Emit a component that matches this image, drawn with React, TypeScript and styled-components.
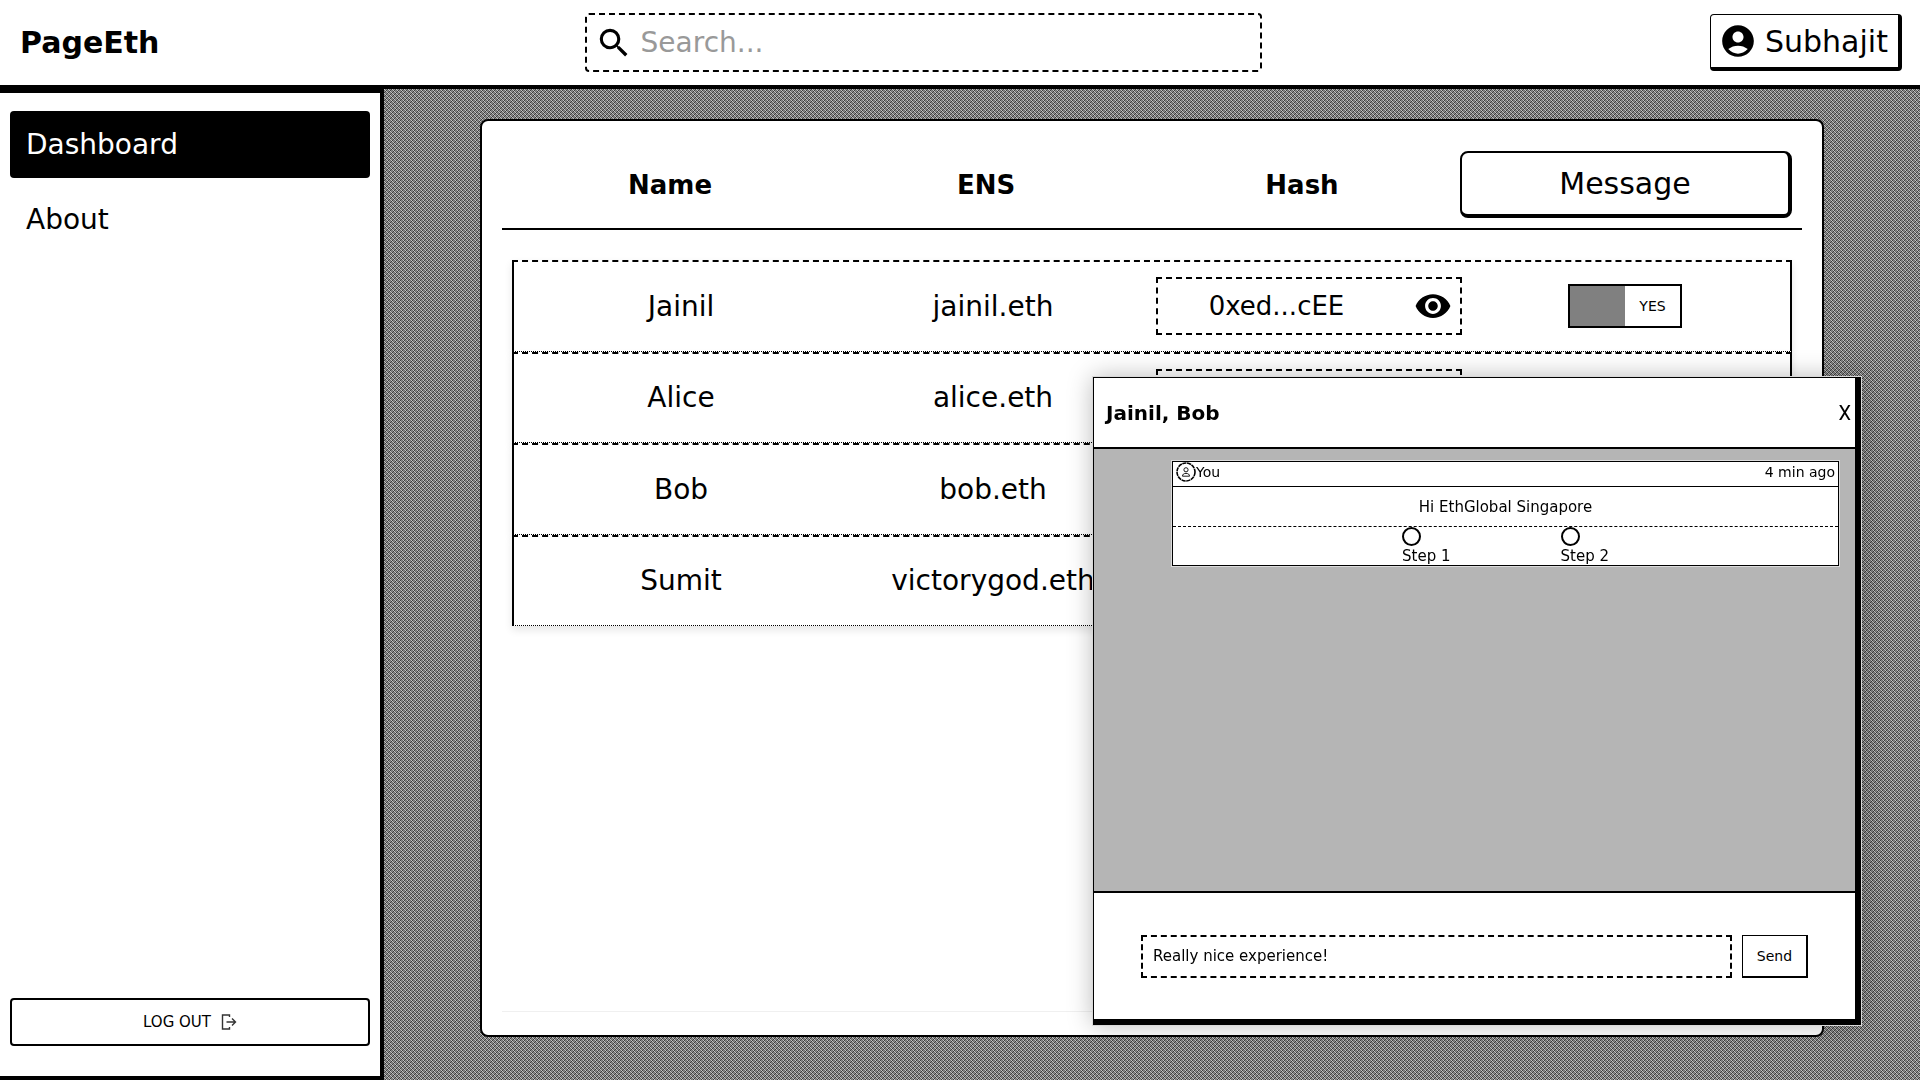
import React, { useState } from 'react';
import styled, { createGlobalStyle, css } from 'styled-components';
import { MdAccountCircle, MdSearch, MdVisibility } from 'react-icons/md';

const GlobalStyle = createGlobalStyle`
  *, *::before, *::after { box-sizing: border-box; }
  body { margin: 0; background: #fff; }
  body, button, input {
    font-family: 'DejaVu Sans', Verdana, sans-serif;
    color: #000;
  }
  button { cursor: pointer; }
`;

const Page = styled.div`
  display: flex;
  flex-direction: column;
  min-height: 100vh;
`;

const TopBar = styled.header`
  display: flex;
  align-items: center;
  padding: 13px 18px 13px 20px;
  border-bottom: 4px solid #000;
  background: #fff;
`;

const Brand = styled.h1`
  flex: 0 0 30%;
  margin: 0;
  font-size: 30px;
  line-height: 40px;
`;

const SearchBox = styled.label`
  display: flex;
  align-items: center;
  gap: 8px;
  width: 36%;
  height: 59px;
  padding: 0 8px;
  border: 2px dashed #000;
  border-radius: 4px;
`;

const SearchInput = styled.input`
  flex: 1;
  min-width: 0;
  border: 0;
  outline: 0;
  padding: 0;
  background: transparent;
  font-size: 28px;
  &::placeholder { color: #999; opacity: 1; }
`;

const UserButton = styled.button`
  display: flex;
  align-items: center;
  gap: 8px;
  min-width: 192px;
  height: 57px;
  margin-left: auto;
  padding: 0 8px;
  border: solid #000;
  border-width: 1px 4px 4px 1px;
  border-radius: 4px;
  background: #fff;
  font-size: 30px;
`;

const Body = styled.div`
  display: flex;
  flex: 1;
`;

const Sidebar = styled.aside`
  display: flex;
  flex-direction: column;
  justify-content: space-between;
  width: 20%;
  padding: 18px 10px 30px;
  border: solid #000;
  border-width: 4px 4px 4px 0;
  background: #fff;
`;

const Nav = styled.nav`
  display: flex;
  flex-direction: column;
  gap: 8px;
`;

const NavLink = styled.a<{ $active?: boolean }>`
  display: flex;
  align-items: center;
  height: 67px;
  padding: 0 16px;
  border-radius: 4px;
  font-size: 28px;
  text-decoration: none;
  color: ${(p) => (p.$active ? '#fff' : '#000')};
  background: ${(p) => (p.$active ? '#000' : 'transparent')};
`;

const LogoutButton = styled.button`
  display: flex;
  align-items: center;
  justify-content: center;
  gap: 10px;
  height: 48px;
  border: 2px solid #000;
  border-radius: 4px;
  background: #fff;
  font-size: 15px;
`;

const Main = styled.main`
  display: flex;
  flex: 1;
  padding: 30px 96px 43px;
  background:
    repeating-conic-gradient(rgba(0, 0, 0, 0.22) 0 25%, rgba(255, 255, 255, 0.18) 0 50%) 0 0 / 4px 4px,
    repeating-conic-gradient(#4c4c4c 0 25%, #b4b4b4 0 50%) 0 0 / 2px 2px;
`;

const Panel = styled.section`
  display: flex;
  flex: 1;
  padding: 30px 20px 23px;
  border: 2px solid #000;
  border-radius: 8px;
  background: #fff;
`;

const Contacts = styled.table`
  display: block;
  flex: 1;
  border-bottom: 1px solid #f0f0f0;
`;

const ContactsHead = styled.thead`
  display: block;
  padding: 0 10px 10px;
  border-bottom: 2px solid #000;
`;

const HeadRow = styled.tr`
  display: grid;
  grid-template-columns: 1fr 1fr 1fr 332px;
  align-items: center;
`;

const HeadCell = styled.th`
  padding: 0;
  font-size: 26px;
  font-weight: 700;
`;

const MessageButton = styled.button`
  display: block;
  width: 100%;
  height: 67px;
  border: solid #000;
  border-width: 2px 4px 4px 2px;
  border-radius: 8px;
  background: #fff;
  font-size: 30px;
`;

const ContactsBody = styled.tbody`
  display: grid;
  grid-auto-rows: 1fr;
  min-height: 366px;
  margin: 30px 10px 0;
`;

const Row = styled.tr`
  display: grid;
  grid-template-columns: repeat(4, minmax(0, 1fr));
  gap: 10px;
  align-items: center;
  padding: 0 12px 0 10px;
  border: 2px solid #000;
  border-top: 2px dashed #000;
  border-bottom: 1px dotted #000;
  background: #fff;
  box-shadow: 0 4px 8px rgba(0, 0, 0, 0.1);
`;

const Cell = styled.td`
  display: flex;
  justify-content: center;
  padding: 0;
  font-size: 28px;
  &:first-child { padding-left: 8px; }
`;

const HashBox = styled.div`
  display: flex;
  flex: 1;
  align-items: center;
  height: 58px;
  border: 2px dashed #000;
  font-size: 26px;
`;

const HashText = styled.span`
  flex: 1;
  text-align: center;
`;

const RevealButton = styled.button`
  display: flex;
  padding: 0 8px 0 19px;
  border: 0;
  background: transparent;
`;

const Toggle = styled.label`
  display: flex;
  align-items: center;
  width: 114px;
  height: 44px;
  border: 2px solid #000;
  background: #fff;
`;

const ToggleInput = styled.input<{ $on: boolean }>`
  appearance: none;
  order: ${(p) => (p.$on ? 0 : 1)};
  width: 50%;
  height: 100%;
  margin: 0;
  background: #808080;
`;

const ToggleText = styled.span`
  width: 50%;
  text-align: center;
  font-size: 14px;
`;

const Chat = styled.section`
  position: fixed;
  right: 59px;
  bottom: 55px;
  display: flex;
  flex-direction: column;
  width: 40vw;
  height: 60vh;
  border: solid #000;
  border-width: 1px 6px 6px 1px;
  background: #fff;
  box-shadow: 0 0 0 1px #d8d8d8, 0 0 24px rgba(0, 0, 0, 0.28);
`;

const ChatHeader = styled.header`
  display: flex;
  align-items: center;
  justify-content: space-between;
  height: 71px;
  padding: 0 4px 0 12px;
  border-bottom: 2px solid #000;
`;

const ChatTitle = styled.h2`
  margin: 0;
  font-size: 20px;
`;

const CloseButton = styled.button`
  padding: 0;
  border: 0;
  background: transparent;
  font-family: Roboto, 'Liberation Sans', sans-serif;
  font-weight: 400;
  font-size: 20px;
`;

const ChatLog = styled.div`
  flex: 1;
  padding: 12px 16px 12px 78px;
  background: #b5b5b5;
`;

const MessageCard = styled.article`
  border: 1px solid #000;
  background: #fff;
  box-shadow: 0 0 0 1px #dcdcdc;
  font-size: 15px;
`;

const MessageMeta = styled.header`
  display: flex;
  align-items: flex-start;
  justify-content: space-between;
  height: 25px;
  padding: 0 3px;
  border-bottom: 1px solid #000;
  font-size: 14px;
  line-height: 20px;
`;

const Author = styled.span`
  display: flex;
  align-items: center;
`;

const MessageText = styled.p`
  margin: 0;
  height: 40px;
  border-bottom: 1px dashed #000;
  text-align: center;
  line-height: 41px;
`;

const Steps = styled.div`
  display: flex;
  justify-content: center;
  gap: 110px;
  height: 38px;
`;

const Step = styled.label`
  display: flex;
  flex-direction: column;
  line-height: 20px;
`;

const StepRadio = styled.input`
  appearance: none;
  flex: none;
  width: 19px;
  height: 19px;
  margin: 0;
  border: 2px solid #000;
  border-radius: 50%;
  background: #fff;
  &:checked { background: #000; box-shadow: inset 0 0 0 3px #fff; }
`;

const Composer = styled.form`
  display: flex;
  align-items: center;
  gap: 10px;
  height: 128px;
  padding: 0 47px;
  border-top: 2px solid #000;
`;

const field = css`
  height: 43px;
  background: #fff;
`;

const ComposerInput = styled.input`
  ${field}
  flex: 1;
  min-width: 0;
  padding: 0 10px;
  border: 2px dashed #000;
  outline: 0;
  font-size: 15px;
`;

const SendButton = styled.button`
  ${field}
  width: 66px;
  padding: 0;
  border: solid #000;
  border-width: 1px 2px 2px 1px;
  font-size: 14px;
`;

const LogoutIcon = () => (
  <svg width="16" height="16" viewBox="0 0 16 16" fill="none" stroke="#333" strokeWidth="1.4" aria-hidden="true">
    <path d="M8.5 3V1H1.5V15H8.5V13" />
    <path d="M5.5 8H14.5M11 4.5L14.5 8L11 11.5" />
  </svg>
);

const AvatarIcon = () => (
  <svg width="20" height="20" viewBox="0 0 20 20" fill="none" stroke="#000" aria-hidden="true">
    <circle cx="10" cy="10" r="9" strokeWidth="1.6" strokeDasharray="4.2 0.6" />
    <circle cx="10" cy="7.8" r="2.1" strokeWidth="0.9" />
    <path d="M6.5 14.2C6.5 12.3 7.8 11.4 10 11.4S13.5 12.3 13.5 14.2Z" strokeWidth="0.9" />
  </svg>
);

const contacts = [
  { name: 'Jainil', ens: 'jainil.eth', hash: '0xed...cEE' },
  { name: 'Alice', ens: 'alice.eth', hash: '0xed...cEE' },
  { name: 'Bob', ens: 'bob.eth', hash: '0xed...cEE' },
  { name: 'Sumit', ens: 'victorygod.eth', hash: '0xed...cEE' },
];

function ContactRow({ name, ens, hash }: { name: string; ens: string; hash: string }) {
  const [on, setOn] = useState(true);
  return (
    <Row>
      <Cell>{name}</Cell>
      <Cell>{ens}</Cell>
      <Cell>
        <HashBox>
          <HashText>{hash}</HashText>
          <RevealButton type="button" aria-label={`Show hash of ${name}`}>
            <MdVisibility size={38} />
          </RevealButton>
        </HashBox>
      </Cell>
      <Cell>
        <Toggle>
          <ToggleInput type="checkbox" $on={on} checked={on} onChange={() => setOn(!on)} />
          <ToggleText>{on ? 'YES' : 'NO'}</ToggleText>
        </Toggle>
      </Cell>
    </Row>
  );
}

export default function App() {
  const [open, setOpen] = useState(true);
  const [draft, setDraft] = useState('Really nice experience!');
  return (
    <Page>
      <GlobalStyle />
      <TopBar>
        <Brand>PageEth</Brand>
        <SearchBox>
          <MdSearch size={38} />
          <SearchInput type="text" placeholder="Search..." aria-label="Search" />
        </SearchBox>
        <UserButton type="button">
          <MdAccountCircle size={38} />
          Subhajit
        </UserButton>
      </TopBar>
      <Body>
        <Sidebar>
          <Nav>
            <NavLink href="#dashboard" $active>Dashboard</NavLink>
            <NavLink href="#about">About</NavLink>
          </Nav>
          <LogoutButton type="button">
            LOG OUT
            <LogoutIcon />
          </LogoutButton>
        </Sidebar>
        <Main>
          <Panel>
            <Contacts>
              <ContactsHead>
                <HeadRow>
                  <HeadCell>Name</HeadCell>
                  <HeadCell>ENS</HeadCell>
                  <HeadCell>Hash</HeadCell>
                  <HeadCell>
                    <MessageButton type="button" onClick={() => setOpen(true)}>Message</MessageButton>
                  </HeadCell>
                </HeadRow>
              </ContactsHead>
              <ContactsBody>
                {contacts.map((c) => (
                  <ContactRow key={c.name} {...c} />
                ))}
              </ContactsBody>
            </Contacts>
          </Panel>
        </Main>
      </Body>
      {open && (
        <Chat>
          <ChatHeader>
            <ChatTitle>Jainil, Bob</ChatTitle>
            <CloseButton type="button" onClick={() => setOpen(false)}>X</CloseButton>
          </ChatHeader>
          <ChatLog>
            <MessageCard>
              <MessageMeta>
                <Author><AvatarIcon />You</Author>
                <span>4 min ago</span>
              </MessageMeta>
              <MessageText>Hi EthGlobal Singapore</MessageText>
              <Steps>
                <Step><StepRadio type="radio" name="step" />Step 1</Step>
                <Step><StepRadio type="radio" name="step" />Step 2</Step>
              </Steps>
            </MessageCard>
          </ChatLog>
          <Composer onSubmit={(e) => e.preventDefault()}>
            <ComposerInput
              type="text"
              aria-label="Message"
              value={draft}
              onChange={(e) => setDraft(e.target.value)}
            />
            <SendButton type="submit">Send</SendButton>
          </Composer>
        </Chat>
      )}
    </Page>
  );
}
